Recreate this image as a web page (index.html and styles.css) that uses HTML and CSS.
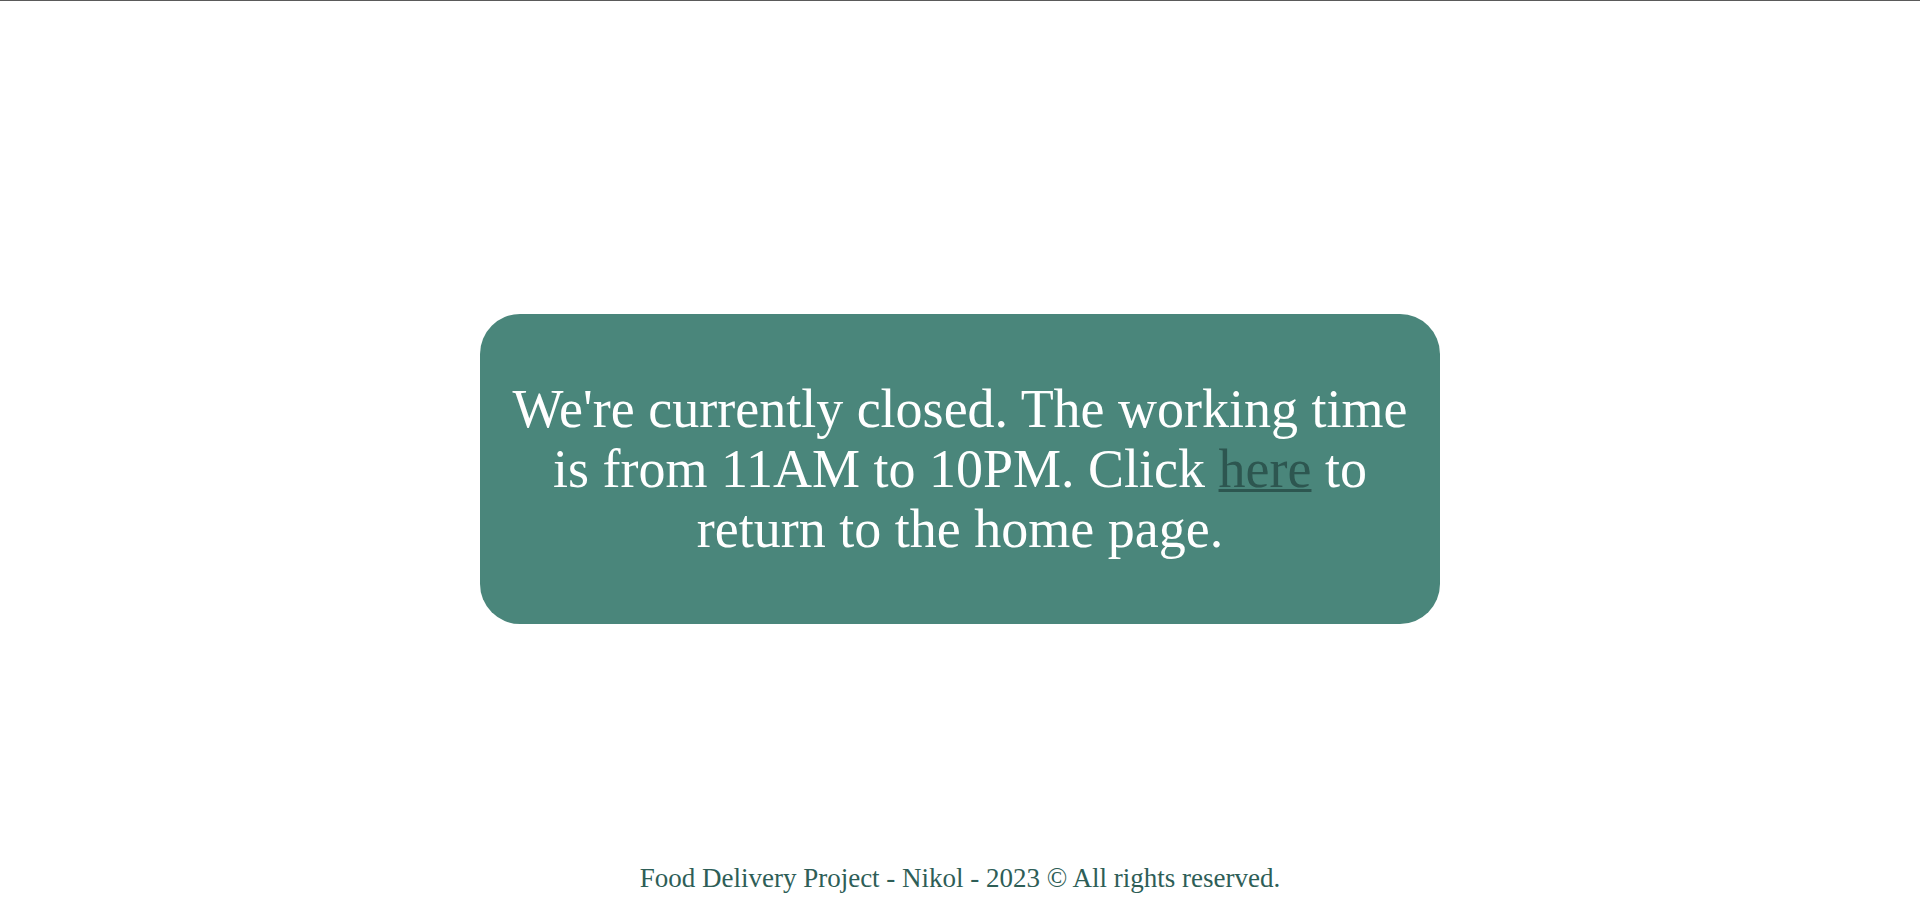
FILE: index.html
```html
<!DOCTYPE html>
<html lang="en">
<head>
<meta charset="utf-8">
<title>Closed</title>
<link rel="stylesheet" href="styles.css">
</head>
<body>
<div class="page">
  <main class="main">
    <section class="notice">
      <p class="notice-text">We're currently closed. The working time<br>is from 11AM to 10PM. Click <a class="notice-link" href="#">here</a> to<br>return to the home page.</p>
    </section>
  </main>
  <footer class="footer">Food Delivery Project - Nikol - 2023 © All rights reserved.</footer>
</div>
</body>
</html>
```
FILE: styles.css
```css
html, body {
  margin: 0;
  padding: 0;
}
body {
  font-family: "Liberation Serif", "DejaVu Serif", serif;
  background: #fff;
  border-top: 1px solid #5a5a5a;
}
.page {
  display: flex;
  flex-direction: column;
  height: 899px;
}
.main {
  flex: 1;
  display: flex;
  justify-content: center;
  align-items: flex-start;
  padding-top: 313px;
}
.notice {
  width: 960px;
  height: 310px;
  box-sizing: border-box;
  background: #4a867b;
  border-radius: 40px;
  display: flex;
  align-items: center;
  justify-content: center;
}
.notice-text {
  margin: 0;
  color: #fff;
  font-size: 54px;
  line-height: 60px;
  text-align: center;
  white-space: nowrap;
}
.notice-link {
  color: #2d5650;
  text-decoration: underline;
  text-decoration-thickness: 3px;
}
.footer {
  text-align: center;
  color: #2e5e57;
  font-size: 27px;
  line-height: 28px;
  padding-bottom: 8px;
}
```
